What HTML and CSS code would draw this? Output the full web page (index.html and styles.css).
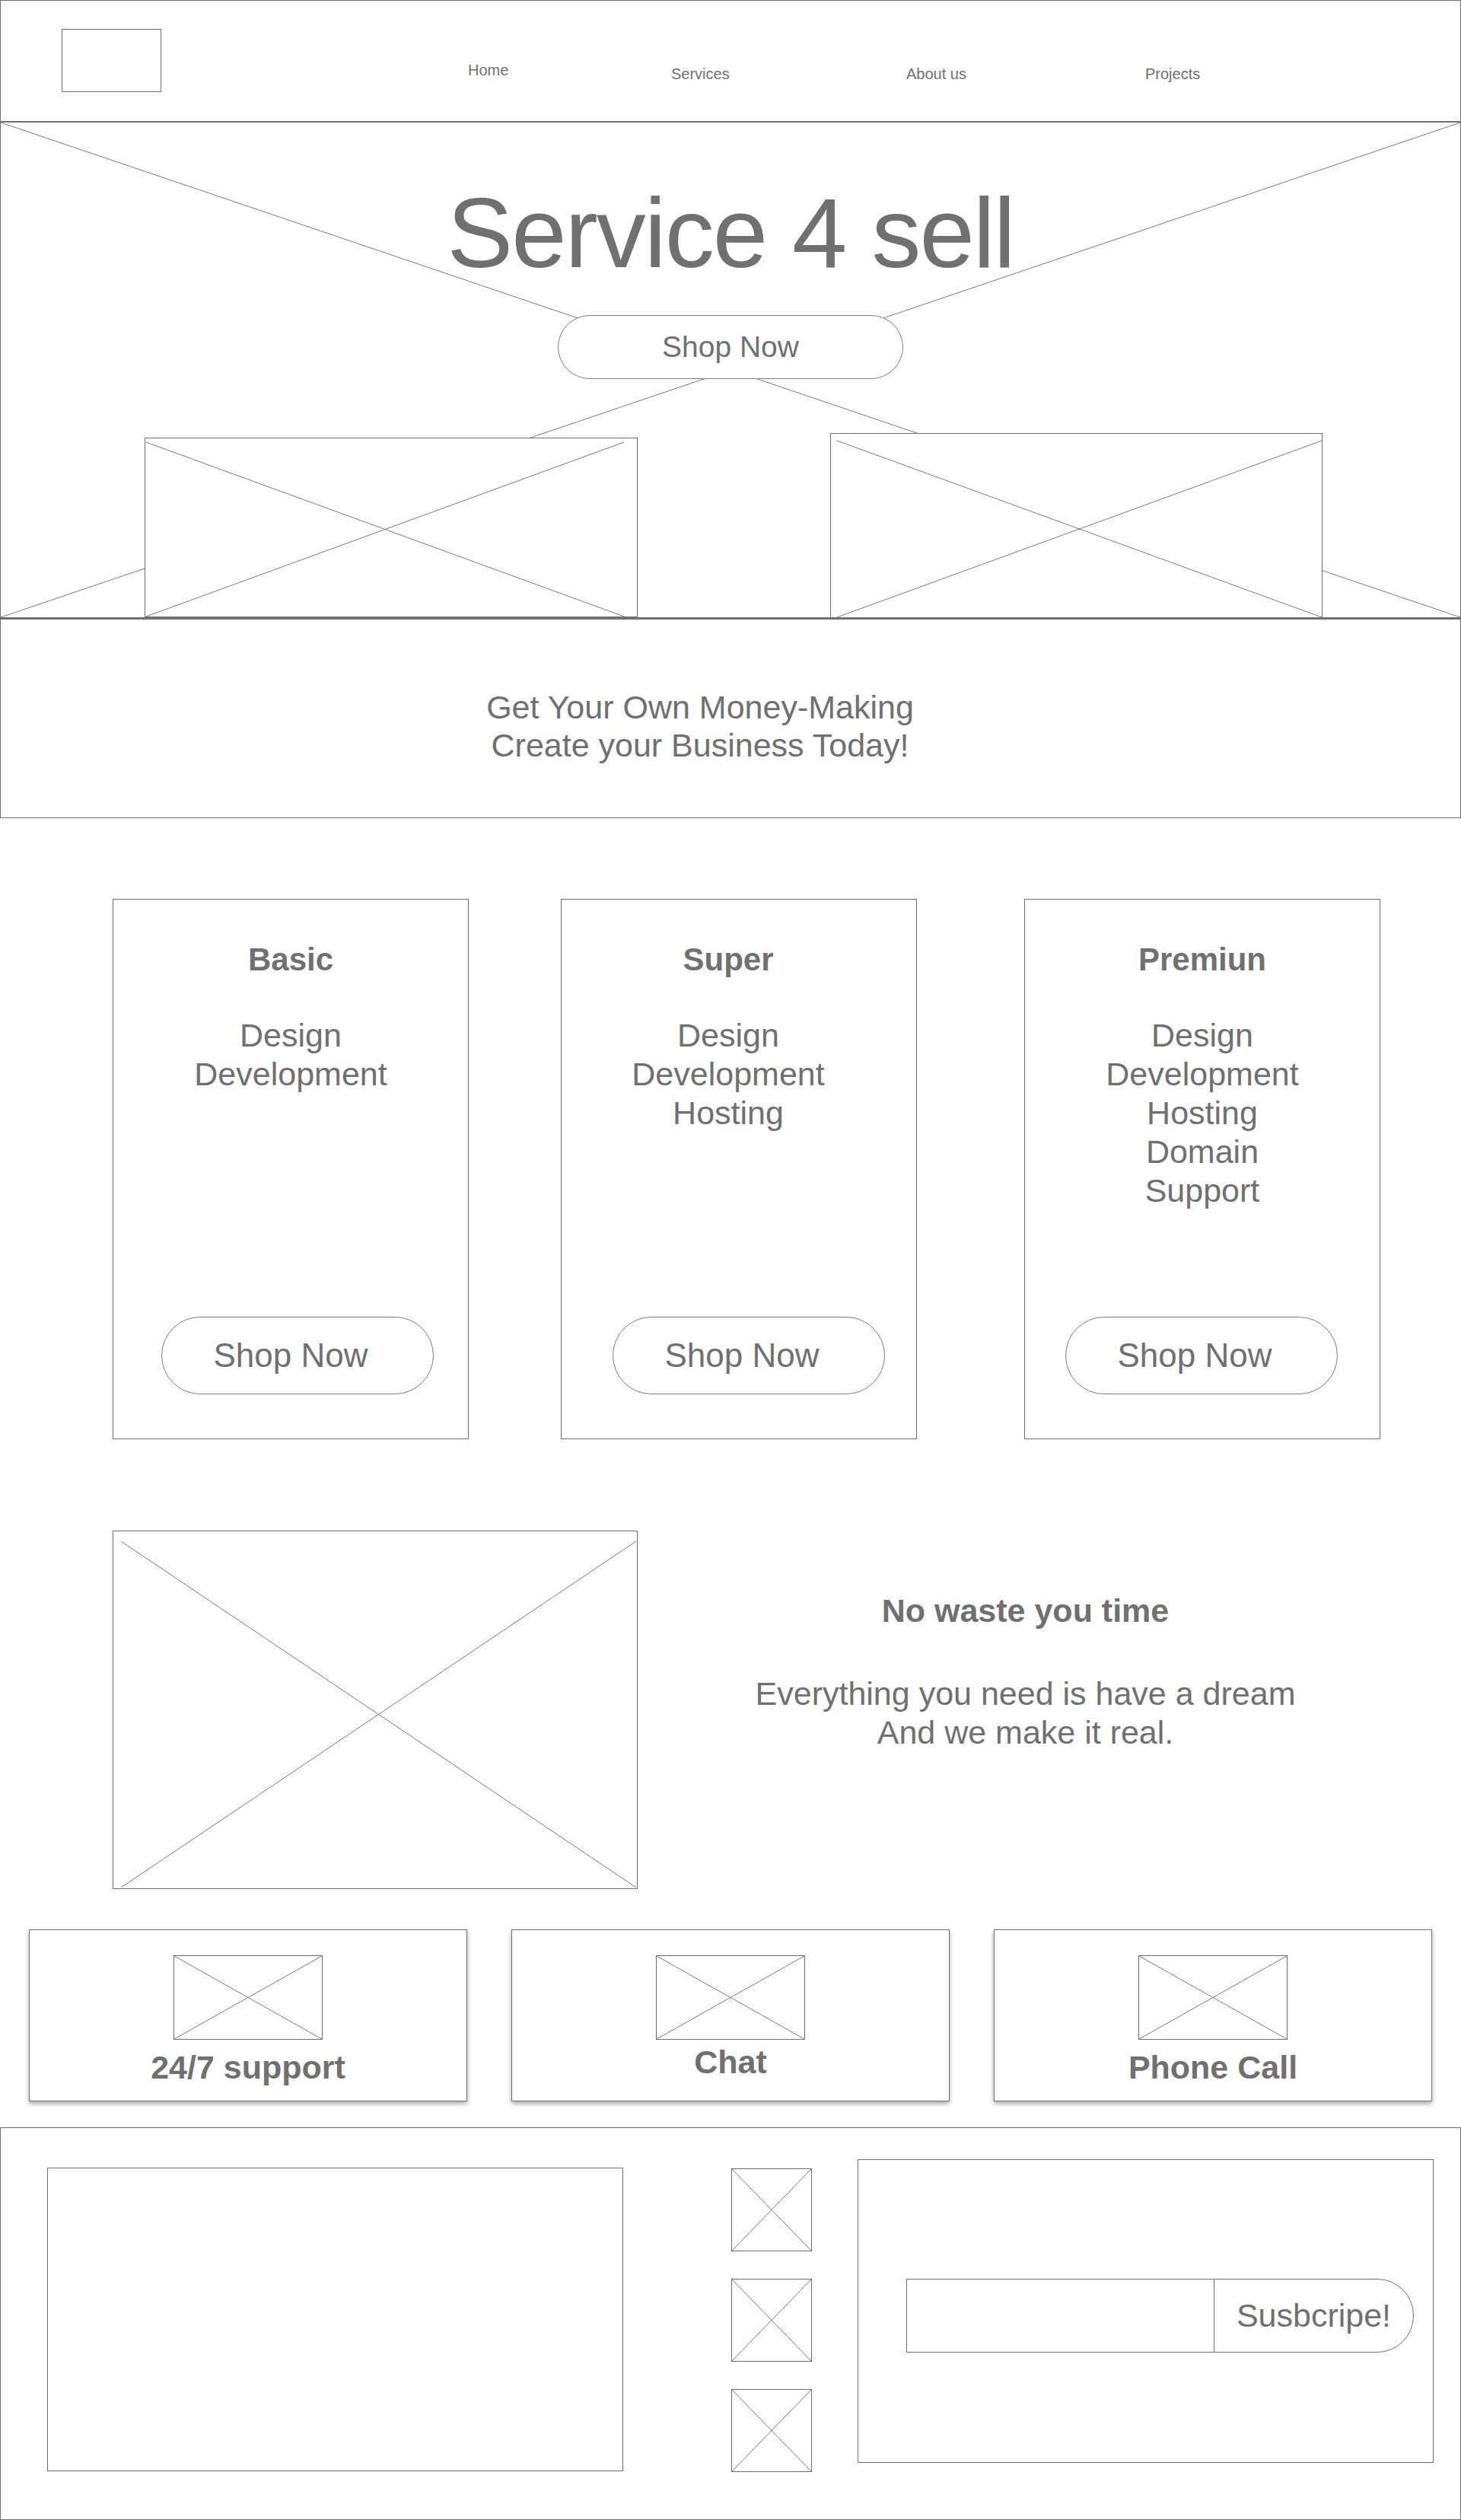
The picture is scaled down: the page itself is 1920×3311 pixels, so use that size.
FILE: index.html
```html
<!DOCTYPE html>
<html lang="en">
<head>
<meta charset="utf-8">
<title>Service 4 sell</title>
<link rel="stylesheet" href="styles.css">
</head>
<body>
<header class="site-header">
  <div class="logo"></div>
  <nav class="nav">
    <a class="nav-link nav-link--home" href="#">Home</a>
    <a class="nav-link" href="#">Services</a>
    <a class="nav-link" href="#">About us</a>
    <a class="nav-link" href="#">Projects</a>
  </nav>
</header>

<section class="hero">
  <svg class="x" viewBox="0 0 100 100" preserveAspectRatio="none" aria-hidden="true"><line x1="0" y1="0" x2="100" y2="100"/><line x1="100" y1="0" x2="0" y2="100"/></svg>
  <h1 class="hero-title">Service 4 sell</h1>
  <a class="pill hero-btn" href="#">Shop Now</a>
  <div class="hero-media">
    <div class="ph ph--hero-left">
      <svg class="x" viewBox="0 0 100 100" preserveAspectRatio="none" aria-hidden="true"><line x1="0" y1="0" x2="100" y2="100"/><line x1="100" y1="0" x2="0" y2="100"/></svg>
    </div>
    <div class="ph ph--hero-right">
      <svg class="x" viewBox="0 0 100 100" preserveAspectRatio="none" aria-hidden="true"><line x1="0" y1="0" x2="100" y2="100"/><line x1="100" y1="0" x2="0" y2="100"/></svg>
    </div>
  </div>
</section>

<section class="tagline">
  <p class="tagline-text">Get Your Own Money-Making<br>Create your Business Today!</p>
</section>

<section class="plans">
  <article class="plan plan--basic">
    <h2 class="plan-title">Basic</h2>
    <ul class="plan-list">
      <li>Design</li>
      <li>Development</li>
    </ul>
    <a class="pill plan-btn" href="#">Shop Now</a>
  </article>
  <article class="plan plan--super">
    <h2 class="plan-title">Super</h2>
    <ul class="plan-list">
      <li>Design</li>
      <li>Development</li>
      <li>Hosting</li>
    </ul>
    <a class="pill plan-btn" href="#">Shop Now</a>
  </article>
  <article class="plan plan--premium">
    <h2 class="plan-title">Premiun</h2>
    <ul class="plan-list">
      <li>Design</li>
      <li>Development</li>
      <li>Hosting</li>
      <li>Domain</li>
      <li>Support</li>
    </ul>
    <a class="pill plan-btn" href="#">Shop Now</a>
  </article>
</section>

<section class="about">
  <div class="ph ph--about">
    <svg class="x" viewBox="0 0 100 100" preserveAspectRatio="none" aria-hidden="true"><line x1="0" y1="0" x2="100" y2="100"/><line x1="100" y1="0" x2="0" y2="100"/></svg>
  </div>
  <div class="about-text">
    <h2 class="about-title">No waste you time</h2>
    <p class="about-body">Everything you need is have a dream<br>And we make it real.</p>
  </div>
</section>

<section class="perks">
  <div class="perk">
    <div class="ph ph--perk">
      <svg class="x" viewBox="0 0 100 100" preserveAspectRatio="none" aria-hidden="true"><line x1="0" y1="0" x2="100" y2="100"/><line x1="100" y1="0" x2="0" y2="100"/></svg>
    </div>
    <h3 class="perk-label">24/7 support</h3>
  </div>
  <div class="perk">
    <div class="ph ph--perk">
      <svg class="x" viewBox="0 0 100 100" preserveAspectRatio="none" aria-hidden="true"><line x1="0" y1="0" x2="100" y2="100"/><line x1="100" y1="0" x2="0" y2="100"/></svg>
    </div>
    <h3 class="perk-label perk-label--tight">Chat</h3>
  </div>
  <div class="perk">
    <div class="ph ph--perk">
      <svg class="x" viewBox="0 0 100 100" preserveAspectRatio="none" aria-hidden="true"><line x1="0" y1="0" x2="100" y2="100"/><line x1="100" y1="0" x2="0" y2="100"/></svg>
    </div>
    <h3 class="perk-label">Phone Call</h3>
  </div>
</section>

<footer class="site-footer">
  <div class="footer-box footer-box--left"></div>
  <div class="socials">
    <div class="ph ph--social">
      <svg class="x" viewBox="0 0 100 100" preserveAspectRatio="none" aria-hidden="true"><line x1="0" y1="0" x2="100" y2="100"/><line x1="100" y1="0" x2="0" y2="100"/></svg>
    </div>
    <div class="ph ph--social">
      <svg class="x" viewBox="0 0 100 100" preserveAspectRatio="none" aria-hidden="true"><line x1="0" y1="0" x2="100" y2="100"/><line x1="100" y1="0" x2="0" y2="100"/></svg>
    </div>
    <div class="ph ph--social">
      <svg class="x" viewBox="0 0 100 100" preserveAspectRatio="none" aria-hidden="true"><line x1="0" y1="0" x2="100" y2="100"/><line x1="100" y1="0" x2="0" y2="100"/></svg>
    </div>
  </div>
  <div class="footer-box footer-box--right">
    <form class="subscribe">
      <input class="subscribe-input" type="email" aria-label="Email">
      <button class="subscribe-btn" type="button">Susbcripe!</button>
    </form>
  </div>
</footer>
</body>
</html>
```

FILE: styles.css
```css
* {
  box-sizing: border-box;
}

html,
body {
  margin: 0;
  padding: 0;
}

body {
  width: 1920px;
  background: #ffffff;
  color: #707070;
  font-family: "Liberation Sans", Arial, Helvetica, sans-serif;
}

a {
  color: inherit;
  text-decoration: none;
}

/* ---------- placeholder (X) boxes ---------- */
.ph {
  position: relative;
  background: #ffffff;
  border: 1px solid #707070;
}

.x {
  position: absolute;
  top: 0;
  left: 0;
  width: 100%;
  height: 100%;
  overflow: visible;
}

.x line {
  stroke: #7a7a7a;
  stroke-width: 1;
  vector-effect: non-scaling-stroke;
}

/* ---------- header ---------- */
.site-header {
  height: 161px;
  border: 1px solid #707070;
  border-bottom-width: 2px;
  display: flex;
  align-items: flex-start;
  padding: 37px 0 0 80px;
}

.logo {
  width: 131px;
  height: 83px;
  border: 1px solid #707070;
}

.nav {
  margin-left: 403px;
  margin-top: 42px;
  display: grid;
  grid-template-columns: 267px 309px 314px auto;
  font-size: 20px;
  line-height: 24px;
}

.nav-link {
  padding-top: 5px;
}

.nav-link--home {
  padding-top: 0;
}

/* ---------- hero ---------- */
.hero {
  position: relative;
  height: 651px;
  border-left: 1px solid #707070;
  border-right: 1px solid #707070;
  border-bottom: 1px solid #707070;
  display: flex;
  flex-direction: column;
  align-items: center;
  padding-top: 80px;
}

.hero-title {
  position: relative;
  margin: 0;
  font-size: 130px;
  line-height: 130px;
  font-weight: 400;
  letter-spacing: -2px;
}

.pill {
  position: relative;
  display: flex;
  align-items: center;
  justify-content: center;
  background: #ffffff;
  border: 1px solid #7d7d7d;
}

.hero-btn {
  margin-top: 43px;
  width: 454px;
  height: 84px;
  border-radius: 42px;
  font-size: 39px;
}

.hero-media {
  margin-top: auto;
  align-self: stretch;
  display: flex;
  align-items: flex-end;
  padding-left: 189px;
  gap: 253px;
}

.ph--hero-left {
  width: 648px;
  height: 236px;
}

.ph--hero-left .x {
  top: 5px;
  left: 1px;
  width: calc(100% - 18px);
  height: calc(100% - 5px);
}

.ph--hero-right {
  width: 647px;
  height: 242px;
  border-bottom: none;
}

.ph--hero-right .x {
  top: 9px;
  left: 8px;
  width: calc(100% - 8px);
  height: calc(100% - 9px);
}

/* ---------- tagline ---------- */
.tagline {
  height: 263px;
  border: 1px solid #707070;
  border-top-width: 2px;
  padding: 90px 80px 0 0;
  text-align: center;
}

.tagline-text {
  margin: 0;
  font-size: 43px;
  line-height: 50px;
}

/* ---------- plans ---------- */
.plans {
  display: flex;
  padding: 106px 0 0 148px;
}

.plan {
  width: 468px;
  height: 710px;
  border: 1px solid #707070;
  display: flex;
  flex-direction: column;
  align-items: center;
  padding-top: 54px;
}

.plan + .plan {
  margin-left: 121px;
}

.plan--premium.plan {
  margin-left: 141px;
}

.plan--super {
  padding-right: 28px;
}

.plan-title {
  margin: 0;
  font-size: 42px;
  line-height: 50px;
  font-weight: 700;
}

.plan-list {
  list-style: none;
  margin: 49px 0 0;
  padding: 0;
  text-align: center;
  font-size: 43px;
  line-height: 51px;
}

.plan-btn {
  align-self: flex-start;
  margin: auto 0 58px 63px;
  width: 358px;
  height: 102px;
  border-radius: 51px;
  font-size: 44px;
  padding-right: 18px;
}

.plan--super .plan-btn {
  margin-left: 67px;
}

.plan--premium .plan-btn {
  margin-left: 53px;
}

/* ---------- about ---------- */
.about {
  display: flex;
  padding: 120px 63px 0 148px;
}

.ph--about {
  width: 690px;
  height: 471px;
  flex: none;
}

.ph--about .x {
  top: 13px;
  left: 10px;
  width: calc(100% - 11px);
  height: calc(100% - 14px);
}

.about-text {
  flex: 1;
  text-align: center;
  padding-top: 80px;
}

.about-title {
  margin: 0;
  font-size: 43px;
  line-height: 50px;
  font-weight: 700;
}

.about-body {
  margin: 59px 0 0;
  font-size: 43px;
  line-height: 51px;
}

/* ---------- perks ---------- */
.perks {
  display: grid;
  grid-template-columns: repeat(3, 1fr);
  column-gap: 58px;
  padding: 53px 38px 0;
}

.perk {
  height: 226px;
  border: 1px solid #707070;
  box-shadow: 0 3px 6px rgba(0, 0, 0, 0.35);
  display: flex;
  flex-direction: column;
  align-items: center;
  padding-top: 33px;
}

.ph--perk {
  width: 196px;
  height: 111px;
}

.perk-label {
  margin: 11px 0 0;
  font-size: 43px;
  line-height: 50px;
  font-weight: 700;
}

.perk-label--tight {
  margin-top: 4px;
}

/* ---------- footer ---------- */
.site-footer {
  margin-top: 34px;
  height: 516px;
  border: 1px solid #707070;
  display: flex;
  align-items: flex-start;
  padding: 41px 0 0 61px;
}

.footer-box {
  width: 757px;
  height: 399px;
  border: 1px solid #707070;
}

.footer-box--left {
  margin-top: 11px;
}

.socials {
  margin: 12px 0 0 142px;
  display: flex;
  flex-direction: column;
  gap: 36px;
}

.ph--social {
  width: 106px;
  height: 109px;
}

.footer-box--right {
  margin-left: 60px;
  padding: 156px 0 0 63px;
}

.subscribe {
  display: flex;
  margin: 0;
}

.subscribe-input {
  width: 404px;
  height: 97px;
  margin: 0;
  border: 1px solid #707070;
  border-right: none;
  border-radius: 0;
  background: #ffffff;
  font-family: inherit;
}

.subscribe-btn {
  width: 263px;
  height: 97px;
  margin: 0;
  border: 1px solid #707070;
  border-radius: 0 48px 48px 0;
  background: #ffffff;
  color: #707070;
  font-family: inherit;
  font-size: 43px;
  padding: 0;
}
```
